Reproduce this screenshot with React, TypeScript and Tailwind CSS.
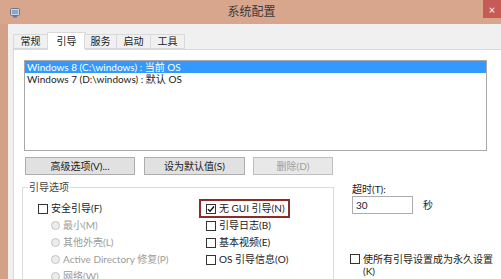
import React from "react";

const font = '"Segoe UI", Lato, "Noto Sans CJK SC", sans-serif';

const CheckBox = ({ checked = false }: { checked?: boolean }) => (
  <span className="w-[10px] h-[10px] border border-[#333] bg-white flex items-center justify-center shrink-0">
    {checked && (
      <svg width="8" height="8" viewBox="0 0 8 8">
        <path d="M1 4.2 L3 6.2 L7 1.5" stroke="#111" strokeWidth="1.4" fill="none" />
      </svg>
    )}
  </span>
);

const Radio = () => (
  <span className="w-[9px] h-[9px] rounded-full border border-[#c4c4c4] bg-[#ececec] shrink-0" />
);

const Row = ({ children, className = "" }: { children: React.ReactNode; className?: string }) => (
  <div className={`h-[17px] flex items-center gap-[3px] whitespace-nowrap ${className}`}>{children}</div>
);

const tabs = [
  { label: "常规", w: "w-[35px]" },
  { label: "引导", w: "w-[39px]", active: true },
  { label: "服务", w: "w-[33px]" },
  { label: "启动", w: "w-[35px]" },
  { label: "工具", w: "w-[35px]" },
];

export default function App() {
  return (
    <div
      className="w-[501px] h-[279px] overflow-hidden flex flex-col bg-[#f0f0f0] text-[10px] text-[#222]"
      style={{ fontFamily: font }}
    >
      {/* title bar */}
      <div className="h-[24px] bg-[#d8a68d] flex items-start shrink-0">
        <div className="w-[10px]" />
        <svg width="10" height="10" viewBox="0 0 10 10" className="mt-[8px]">
          <rect x="0.5" y="0.5" width="9" height="7" rx="1" fill="#c8d2e0" stroke="#6d7890" />
          <rect x="2" y="2" width="6" height="4" fill="#8fa4c4" />
          <rect x="3" y="8" width="4" height="1.5" fill="#6d7890" />
        </svg>
        <div className="flex-1 text-center text-[12px] leading-[24px] text-[#3a3a3a]">系统配置</div>
        <div className="w-[18px] h-[18px] bg-[#c85a55] flex items-center justify-center text-white text-[11px] leading-none">
          ×
        </div>
      </div>

      <div className="flex-1 flex">
        <div className="w-[8px] bg-[#d3a088] shrink-0" />
        <div className="flex-1 pl-[5px] pt-[8px] pr-[4px] flex flex-col">
          {/* tabs */}
          <div className="flex items-end h-[17px] relative z-10">
            {tabs.map((t) => (
              <div
                key={t.label}
                className={`${t.w} border border-[#d9d9d9] flex items-center justify-center ${
                  t.active
                    ? "h-[18px] -mb-px border-b-0 bg-white -mx-[1px]"
                    : "h-[15px] bg-[#f0f0f0] -ml-px first:ml-0"
                }`}
              >
                {t.label}
              </div>
            ))}
          </div>

          {/* panel */}
          <div className="flex-1 border border-[#d9d9d9] bg-white pl-[10px] pr-[9px] pt-[10px]">
            <div className="w-[463px] h-[91px] border border-[#a8a8a8] bg-white">
              <div className="h-[12px] bg-[#3399ff] text-white pl-[2px] leading-[12px] overflow-hidden">
                Windows 8 (C:\windows) : 当前 OS
              </div>
              <div className="h-[12px] pl-[2px] leading-[12px] overflow-hidden">
                Windows 7 (D:\windows) : 默认 OS
              </div>
            </div>

            <div className="flex mt-[6px] ml-[1px]">
              <div className="w-[110px] h-[18px] border border-[#adadad] bg-[#e1e1e1] flex items-center justify-center">
                高级选项(V)...
              </div>
              <div className="w-[101px] h-[18px] ml-[9px] border border-[#adadad] bg-[#e1e1e1] flex items-center justify-center">
                设为默认值(S)
              </div>
              <div className="w-[80px] h-[18px] ml-[8px] border border-[#bfbfbf] bg-[#e8e8e8] flex items-center justify-center text-[#a0a0a0]">
                删除(D)
              </div>
            </div>

            <div className="flex mt-[12px] -ml-[2px]">
              {/* group box */}
              <div className="w-[312px] h-[120px] border border-[#dcdcdc] shrink-0">
                <div className="-mt-[7px] ml-[5px] px-[1px] bg-white w-fit leading-[12px] text-[#444]">
                  引导选项
                </div>
                <div className="flex mt-[7px] pl-[15px]">
                  <div className="w-[162px]">
                    <Row>
                      <CheckBox />
                      <span>安全引导(F)</span>
                    </Row>
                    <div className="pl-[13px] text-[#9c9c9c]">
                      <Row>
                        <Radio />
                        <span>最小(M)</span>
                      </Row>
                      <Row>
                        <Radio />
                        <span>其他外壳(L)</span>
                      </Row>
                      <Row>
                        <Radio />
                        <span>Active Directory 修复(P)</span>
                      </Row>
                      <Row>
                        <Radio />
                        <span>网络(W)</span>
                      </Row>
                    </div>
                  </div>
                  <div>
                    <Row className="w-[89px] pl-[6px] outline-2 -outline-offset-1 outline-[#8e2c2c]">
                      <CheckBox checked />
                      <span>无 GUI 引导(N)</span>
                    </Row>
                    <Row className="pl-[6px]">
                      <CheckBox />
                      <span>引导日志(B)</span>
                    </Row>
                    <Row className="pl-[6px]">
                      <CheckBox />
                      <span>基本视频(E)</span>
                    </Row>
                    <Row className="pl-[6px]">
                      <CheckBox />
                      <span>OS 引导信息(O)</span>
                    </Row>
                  </div>
                </div>
              </div>

              {/* timeout */}
              <div className="ml-[18px] -mt-[4px]">
                <div className="h-[12px] leading-[12px]">超时(T):</div>
                <div className="flex items-center mt-[1px]">
                  <div className="w-[61px] h-[18px] border border-[#abadb3] bg-white pl-[3px] leading-[16px]">30</div>
                  <span className="ml-[10px]">秒</span>
                </div>
                <div className="flex items-start gap-[3px] mt-[39px] -ml-[2px]">
                  <span className="mt-[1px]">
                    <CheckBox />
                  </span>
                  <span className="w-[131px] leading-[12px]">使所有引导设置成为永久设置 (K)</span>
                </div>
              </div>
            </div>
          </div>
        </div>
      </div>
    </div>
  );
}
